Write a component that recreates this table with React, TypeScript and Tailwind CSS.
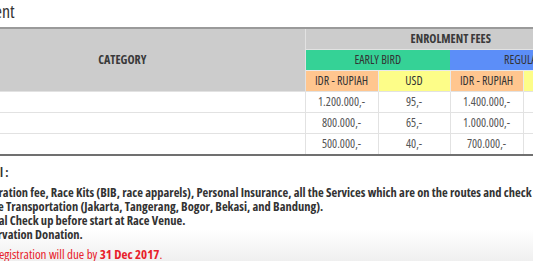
import React from "react";

const rows = [
  { cat: "42K", a: "1.200.000,-", b: "95,-", c: "1.400.000,-", d: "110,-" },
  { cat: "21K", a: "800.000,-", b: "65,-", c: "1.000.000,-", d: "80,-" },
  { cat: "10K", a: "500.000,-", b: "40,-", c: "700.000,-", d: "55,-" },
];

export default function App() {
  return (
    <div
      className="w-[533px] h-[261px] overflow-hidden bg-[linear-gradient(to_bottom,#ffffff_88%,#efefef_100%)] text-[#333] [font-stretch:75%]"
      style={{ fontFamily: '"Open Sans", "Noto Sans", sans-serif' }}
    >
      <div className="ml-[-50px] h-[27px] text-[18px] leading-[22px] text-[#333]">
        Enrolment
      </div>
      <table className="ml-[-60px] w-[656px] table-fixed border-collapse border-t-2 border-b-2 border-t-[#9a9a9a] border-b-[#707070] text-[12px]">
        <colgroup>
          <col className="w-[365px]" />
          <col className="w-[73px]" />
          <col className="w-[72px]" />
          <col className="w-[73px]" />
          <col className="w-[73px]" />
        </colgroup>
        <thead>
          <tr className="h-[21px]">
            <th
              rowSpan={3}
              className="bg-[#cccccc] border-r border-[#e2e2e2] text-center text-[12px] font-bold text-[#3a3a3a]"
            >
              CATEGORY
            </th>
            <th
              colSpan={4}
              className="bg-[#cccccc] border-b border-[#e2e2e2] text-center text-[12px] font-bold text-[#3a3a3a] leading-[20px]"
            >
              ENROLMENT FEES
            </th>
          </tr>
          <tr className="h-[21px]">
            <th colSpan={2} className="bg-[#35d296] border-b border-[#eaeaea] font-normal text-[12px] leading-[20px] text-[#333]">
              EARLY BIRD
            </th>
            <th colSpan={2} className="bg-[#5c8ef8] border-b border-[#eaeaea] font-normal text-[12px] leading-[20px] text-[#333]">
              REGULAR
            </th>
          </tr>
          <tr className="h-[21px]">
            <th className="bg-[#ffc68f] border-r border-[#eaeaea] font-normal text-[12px] leading-[20px] text-[#333] whitespace-nowrap">IDR - RUPIAH</th>
            <th className="bg-[#fdfd88] border-r border-[#eaeaea] font-normal text-[12px] leading-[20px] text-[#333]">USD</th>
            <th className="bg-[#ffc68f] border-r border-[#eaeaea] font-normal text-[12px] leading-[20px] text-[#333] whitespace-nowrap">IDR - RUPIAH</th>
            <th className="bg-[#fdfd88] font-normal text-[12px] leading-[20px] text-[#333]">USD</th>
          </tr>
        </thead>
        <tbody>
          {rows.map((r, i) => (
            <tr key={i} className="h-[21px] bg-white border-t border-[#e2e2e2]">
              <td className="pl-[8px] text-left border-r border-[#e2e2e2] text-[#555] leading-[20px]">{r.cat}</td>
              <td className="text-center border-r border-[#e2e2e2] text-[#555] leading-[20px]">{r.a}</td>
              <td className="text-center border-r border-[#e2e2e2] text-[#555] leading-[20px]">{r.b}</td>
              <td className="text-center border-r border-[#e2e2e2] text-[#555] leading-[20px]">{r.c}</td>
              <td className="text-center text-[#555] leading-[20px]">{r.d}</td>
            </tr>
          ))}
        </tbody>
      </table>
      <div className="ml-[-31px] mt-[10px] text-[12.5px] leading-[14px] font-bold text-[#333] whitespace-nowrap">
        <div className="ml-[-4px]">General :</div>
        <div className="mt-[6px]">
          <div>Registration fee, Race Kits (BIB, race apparels), Personal Insurance, all the Services which are on the routes and check points.</div>
          <div>Shuttle Transportation (Jakarta, Tangerang, Bogor, Bekasi, and Bandung).</div>
          <div>Medical Check up before start at Race Venue.</div>
          <div>Conservation Donation.</div>
        </div>
        <div className="ml-[-3px] mt-[5px] text-[13px] font-normal text-[#e8202a]">
          Note: Registration will due by <span className="font-bold">31 Dec 2017</span>.
        </div>
      </div>
    </div>
  );
}
